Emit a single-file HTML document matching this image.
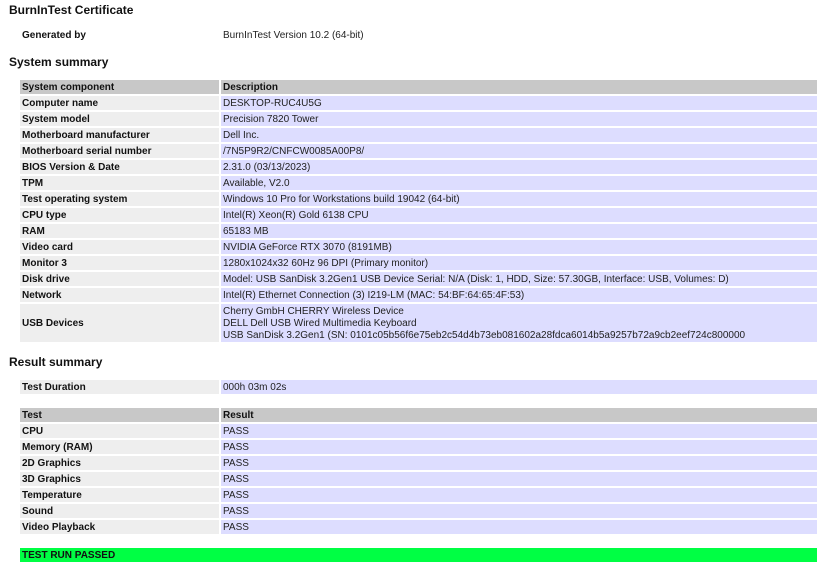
<!DOCTYPE html>
<html><head><meta charset="utf-8"><style>
body{margin:0;width:823px;height:568px;background:#fff;font-family:"Liberation Sans",Arial,sans-serif;font-size:10px;color:#222;position:relative;overflow:hidden}
.h{position:absolute;left:9px;font-size:12px;font-weight:bold;color:#111}
.r{position:absolute;left:20px;width:797px;height:14px;line-height:16px}
.l{position:absolute;left:0;top:0;width:199px;height:100%;background:#eee;font-weight:bold;padding-left:2px;box-sizing:border-box;color:#111}
.v{position:absolute;left:201px;top:0;right:0;height:100%;background:#ddf;padding-left:2px;box-sizing:border-box}
.hd .l,.hd .v{background:#c8c8c8;font-weight:bold;color:#111}
.ng .l,.ng .v{background:none}
</style></head><body>
<div class="h" style="top:3px">BurnInTest Certificate</div>
<div class="r ng" style="top:28px"><div class="l">Generated by</div><div class="v">BurnInTest Version 10.2 (64-bit)</div></div>
<div class="h" style="top:55px">System summary</div>
<div class="r hd" style="top:80px"><div class="l">System component</div><div class="v">Description</div></div>
<div class="r" style="top:96px"><div class="l">Computer name</div><div class="v">DESKTOP-RUC4U5G</div></div>
<div class="r" style="top:112px"><div class="l">System model</div><div class="v">Precision 7820 Tower</div></div>
<div class="r" style="top:128px"><div class="l">Motherboard manufacturer</div><div class="v">Dell Inc.</div></div>
<div class="r" style="top:144px"><div class="l">Motherboard serial number</div><div class="v">/7N5P9R2/CNFCW0085A00P8/</div></div>
<div class="r" style="top:160px"><div class="l">BIOS Version &amp; Date</div><div class="v">2.31.0 (03/13/2023)</div></div>
<div class="r" style="top:176px"><div class="l">TPM</div><div class="v">Available, V2.0</div></div>
<div class="r" style="top:192px"><div class="l">Test operating system</div><div class="v">Windows 10 Pro for Workstations build 19042 (64-bit)</div></div>
<div class="r" style="top:208px"><div class="l">CPU type</div><div class="v">Intel(R) Xeon(R) Gold 6138 CPU</div></div>
<div class="r" style="top:224px"><div class="l">RAM</div><div class="v">65183 MB</div></div>
<div class="r" style="top:240px"><div class="l">Video card</div><div class="v">NVIDIA GeForce RTX 3070 (8191MB)</div></div>
<div class="r" style="top:256px"><div class="l">Monitor 3</div><div class="v">1280x1024x32 60Hz 96 DPI (Primary monitor)</div></div>
<div class="r" style="top:272px"><div class="l">Disk drive</div><div class="v">Model: USB SanDisk 3.2Gen1 USB Device Serial: N/A (Disk: 1, HDD, Size: 57.30GB, Interface: USB, Volumes: D)</div></div>
<div class="r" style="top:288px"><div class="l">Network</div><div class="v">Intel(R) Ethernet Connection (3) I219-LM (MAC: 54:BF:64:65:4F:53)</div></div>
<div class="r" style="top:304px;height:38px;line-height:12px"><div class="l" style="line-height:39px">USB Devices</div><div class="v" style="padding-top:2px">Cherry GmbH CHERRY Wireless Device<br>DELL Dell USB Wired Multimedia Keyboard<br>USB SanDisk 3.2Gen1 (SN: 0101c05b56f6e75eb2c54d4b73eb081602a28fdca6014b5a9257b72a9cb2eef724c800000</div></div>
<div class="h" style="top:355px">Result summary</div>
<div class="r" style="top:380px"><div class="l">Test Duration</div><div class="v">000h 03m 02s</div></div>
<div class="r hd" style="top:408px"><div class="l">Test</div><div class="v">Result</div></div>
<div class="r" style="top:424px"><div class="l">CPU</div><div class="v">PASS</div></div>
<div class="r" style="top:440px"><div class="l">Memory (RAM)</div><div class="v">PASS</div></div>
<div class="r" style="top:456px"><div class="l">2D Graphics</div><div class="v">PASS</div></div>
<div class="r" style="top:472px"><div class="l">3D Graphics</div><div class="v">PASS</div></div>
<div class="r" style="top:488px"><div class="l">Temperature</div><div class="v">PASS</div></div>
<div class="r" style="top:504px"><div class="l">Sound</div><div class="v">PASS</div></div>
<div class="r" style="top:520px"><div class="l">Video Playback</div><div class="v">PASS</div></div>
<div class="r" style="top:548px;background:#0f4;font-weight:bold;padding-left:2px;box-sizing:border-box;color:#111">TEST RUN PASSED</div>
</body></html>
